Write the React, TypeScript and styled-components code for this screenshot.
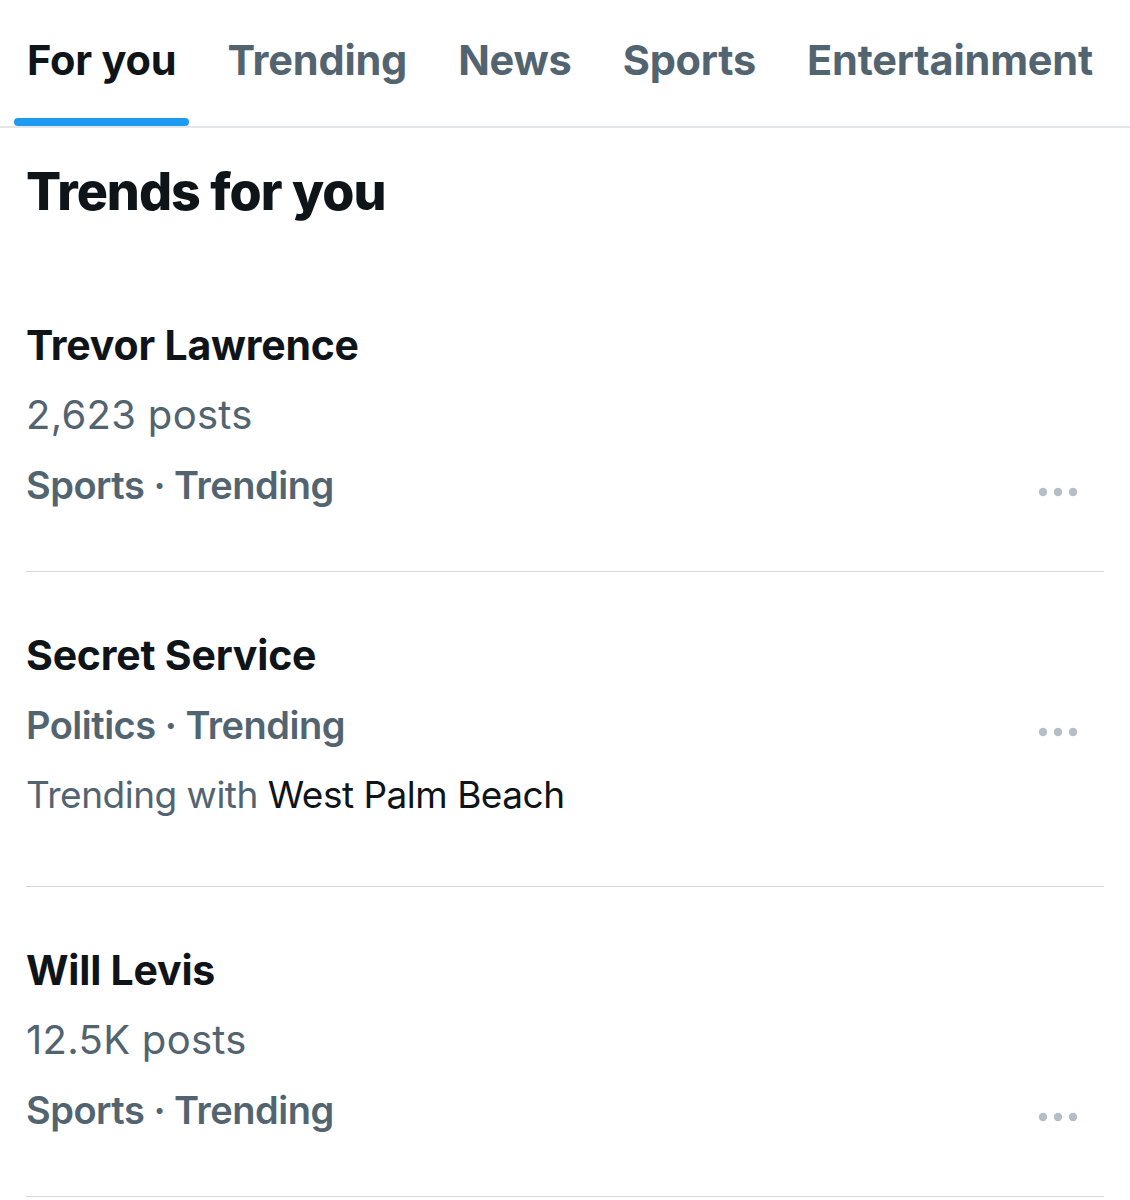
import React from 'react'
import styled, { createGlobalStyle } from 'styled-components'

const GlobalStyle = createGlobalStyle`
  body {
    margin: 0;
    background: #ffffff;
    font-family: Inter, "Noto Sans", sans-serif;
    color: #0f1419;
  }
`

const Page = styled.div`
  width: 1130px;
`

const TabBar = styled.nav`
  display: flex;
  gap: 25px;
  height: 126px;
  padding-left: 14px;
  border-bottom: 2px solid #e3e7ea;
`

const Tab = styled.div<{ $active?: boolean }>`
  position: relative;
  flex-shrink: 0;
  display: flex;
  align-items: center;
  padding: 0 13px 6px;
  white-space: nowrap;
  font-size: 41.5px;
  letter-spacing: -0.2px;
  font-weight: 700;
  color: ${(p) => (p.$active ? '#0f1419' : '#536471')};

  &::after {
    content: '';
    display: ${(p) => (p.$active ? 'block' : 'none')};
    position: absolute;
    left: 0;
    right: 0;
    bottom: 0;
    height: 8px;
    border-radius: 4px;
    background: #1d9bf0;
  }
`

const Content = styled.main`
  padding: 0 26px 0 26px;
`

const Heading = styled.h2`
  margin: 32px 0 0;
  height: 102px;
  font-size: 52px;
  line-height: 64px;
  letter-spacing: -1px;
  font-weight: 800;
`

const Row = styled.section`
  padding: 48px 0 51px;
  border-bottom: 1px solid #d5d9dc;
`

const Title = styled.div`
  font-size: 41px;
  line-height: 70px;
  letter-spacing: -0.2px;
  font-weight: 700;
`

const Meta = styled.div<{ $small?: boolean }>`
  font-size: ${(p) => (p.$small ? '37px' : '40px')};
  letter-spacing: ${(p) => (p.$small ? '-0.5px' : '0.3px')};
  line-height: 70px;
  margin-bottom: ${(p) => (p.$small ? '5px' : '0')};
  color: #536471;
`

const Place = styled.span`
  color: #0f1419;
`

const CategoryLine = styled.div`
  display: flex;
  align-items: center;
  justify-content: space-between;
  font-size: 38px;
  line-height: 70px;
  letter-spacing: -0.5px;
  font-weight: 600;
  color: #536471;
`

const MoreButton = styled.svg`
  width: 40px;
  height: 10px;
  margin-right: 26px;
  margin-top: 14px;
  fill: #b3bec6;
`

type Trend = {
  title: string
  category: string
  posts?: string
  place?: string
}

const trends: Trend[] = [
  { title: 'Trevor Lawrence', posts: '2,623 posts', category: 'Sports · Trending' },
  { title: 'Secret Service', category: 'Politics · Trending', place: 'West Palm Beach' },
  { title: 'Will Levis', posts: '12.5K posts', category: 'Sports · Trending' },
]

const tabs = ['For you', 'Trending', 'News', 'Sports', 'Entertainment']

const More = () => (
  <MoreButton viewBox="0 0 40 10">
    <circle cx="5" cy="5" r="4.2" />
    <circle cx="20" cy="5" r="4.2" />
    <circle cx="35" cy="5" r="4.2" />
  </MoreButton>
)

const TrendRow = ({ trend }: { trend: Trend }) => {
  const category = (
    <CategoryLine>
      <span>{trend.category}</span>
      <More />
    </CategoryLine>
  )

  return (
    <Row>
      <Title>{trend.title}</Title>
      {trend.posts ? (
        <>
          <Meta>{trend.posts}</Meta>
          {category}
        </>
      ) : (
        <>
          {category}
          <Meta $small>
            Trending with <Place>{trend.place}</Place>
          </Meta>
        </>
      )}
    </Row>
  )
}

export default function App() {
  return (
    <Page>
      <GlobalStyle />
      <TabBar>
        {tabs.map((t, i) => (
          <Tab key={t} $active={i === 0}>
            {t}
          </Tab>
        ))}
      </TabBar>
      <Content>
        <Heading>Trends for you</Heading>
        {trends.map((t) => (
          <TrendRow key={t.title} trend={t} />
        ))}
      </Content>
    </Page>
  )
}
